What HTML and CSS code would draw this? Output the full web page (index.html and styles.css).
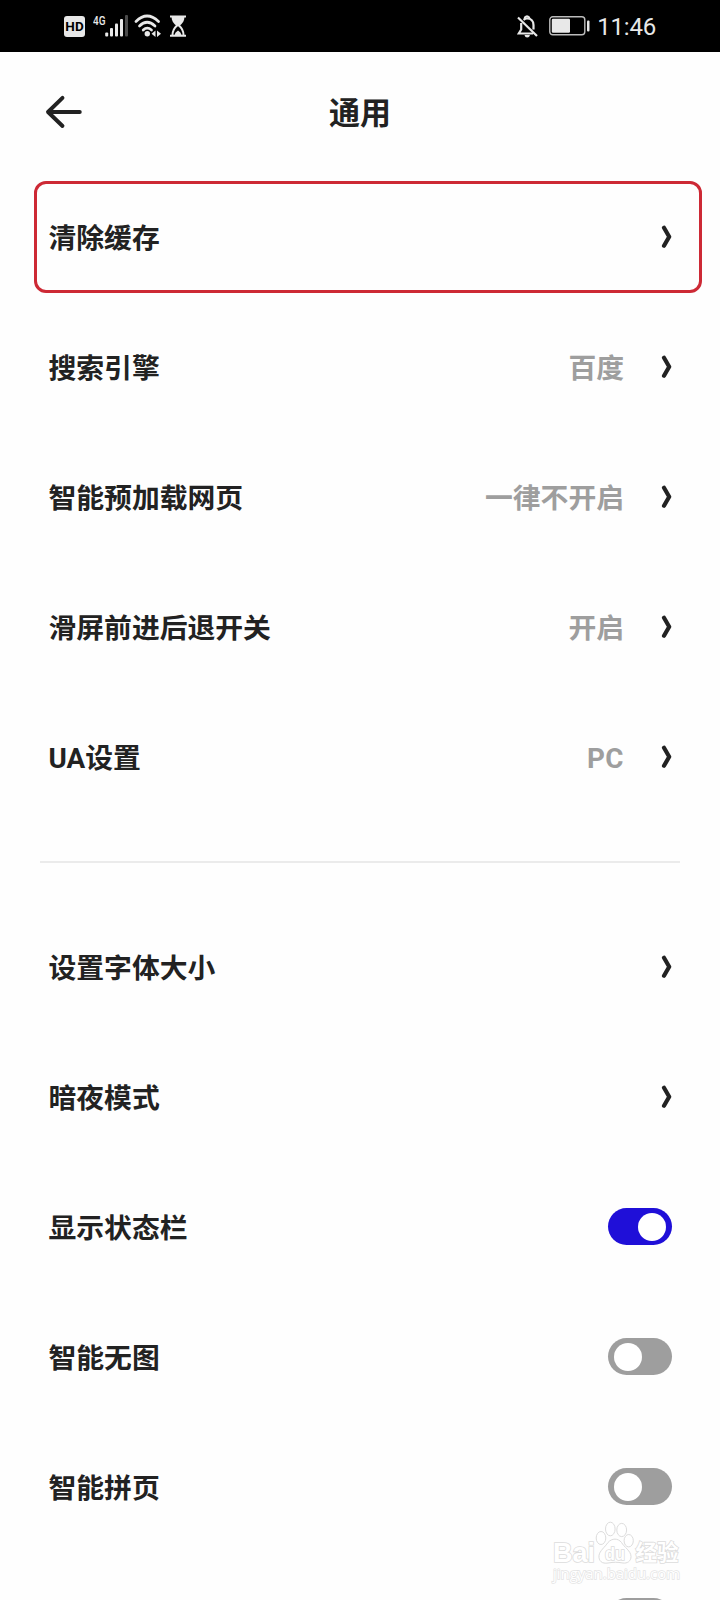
FILE: index.html
```html
<!DOCTYPE html>
<html lang="zh-CN">
<head>
<meta charset="utf-8">
<title>通用</title>
<link rel="stylesheet" href="styles.css">
</head>
<body>
<svg class="defs" width="0" height="0">
  <symbol id="chevron" viewBox="0 0 12 24"><path d="M4 2.800 L9.200 11.800 L4 20.800" fill="none" stroke="#222" stroke-width="4.200" stroke-linecap="round" stroke-linejoin="round"/></symbol>
</svg>
<div class="screen">
  <header class="status">
    <div class="status-left">
      <span class="hd">HD</span>
      <svg class="signal" width="36" height="24" viewBox="0 0 36 24">
        <g fill="#e8e8e8"><rect x="12.200" y="18.400" width="3" height="4" rx="1"/><rect x="17" y="14" width="3" height="8.400" rx="1"/><rect x="22" y="9.400" width="3" height="13" rx="1"/><rect x="27" y="5" width="3" height="17.400" rx="1"/></g>
        <rect x="32" y="1" width="3" height="21.400" rx="1" fill="#4a4a4a"/>
        <text class="net" x="0" y="10.500" textLength="12.500" lengthAdjust="spacingAndGlyphs">4G</text>
      </svg>
      <svg class="wifi" width="28" height="24" viewBox="0 0 28 24">
        <g fill="none" stroke="#e8e8e8" stroke-width="2.700" stroke-linecap="round"><path d="M2 7.500 Q13 -3.500 24.500 7.500"/><path d="M5.500 12 Q13 4.500 21 12"/><path d="M9.200 16 Q13.200 12.200 17.500 16"/></g>
        <circle cx="13.300" cy="19.800" r="2.700" fill="#e8e8e8"/>
        <path d="M21.500 16.500 V23 L17.500 19.800 Z M23 16.500 V23 L27 19.800 Z" fill="#e8e8e8"/>
      </svg>
      <svg class="hourglass" width="18" height="22" viewBox="0 0 18 22">
        <path d="M1 1.500 H17 M1 20.700 H17" stroke="#e8e8e8" stroke-width="2"/>
        <path d="M2.500 1.500 H15.500 C15.500 6 13.500 8.500 10.500 11 H7.500 C4.500 8.500 2.500 6 2.500 1.500 Z" fill="#e8e8e8"/>
        <path d="M3.500 20 C3.500 15 5.200 13 8 10.500 H10 C12.800 13 14.500 15 14.500 20" fill="none" stroke="#e8e8e8" stroke-width="2"/>
        <path d="M5.500 20 Q6 17 9 15.500 Q12 17 12.500 20 Z" fill="#e8e8e8"/>
      </svg>
    </div>
    <div class="status-right">
      <svg class="bell" width="22" height="24" viewBox="0 0 22 24">
        <g fill="none" stroke="#e8e8e8" stroke-width="2.200"><path d="M1 2.500 L20 21"/><path d="M4.200 8 V14.500 L1.800 18.500 H16"/><path d="M6.500 4.800 Q8.500 3.400 10 3.400 C14 3.400 16.500 6.300 16.500 10 V14.500"/><path d="M8 4 V2.500 Q10 0 12 2.500 V4"/></g>
        <path d="M7.500 20 H13 Q12.500 22.500 10.200 22.500 Q8 22.500 7.500 20 Z" fill="#e8e8e8"/>
      </svg>
      <svg class="battery" width="42" height="20" viewBox="0 0 42 20">
        <rect x=".8" y=".8" width="35" height="18" rx="3" fill="none" stroke="#bcbcbc" stroke-width="1.400"/>
        <rect x="2.800" y="2.800" width="18.200" height="14" rx="1.200" fill="#e8e8e8"/>
        <rect x="38" y="4.500" width="2.500" height="11" rx="1" fill="#e8e8e8"/>
      </svg>
      <span class="clock">11:46</span>
    </div>
  </header>

  <nav class="titlebar">
    <svg class="back" width="38" height="34" viewBox="0 0 38 34"><path d="M34.800 17 H3 M17.500 2.800 L3 17 L17.500 31" fill="none" stroke="#222" stroke-width="3.900" stroke-linecap="round" stroke-linejoin="round"/></svg>
    <h1 class="title">通用</h1>
  </nav>

  <main>
    <section class="group">
      <div class="row highlighted"><span class="label">清除缓存</span><svg class="chev"><use href="#chevron"/></svg></div>
      <div class="row"><span class="label">搜索引擎</span><span class="value">百度</span><svg class="chev"><use href="#chevron"/></svg></div>
      <div class="row"><span class="label">智能预加载网页</span><span class="value">一律不开启</span><svg class="chev"><use href="#chevron"/></svg></div>
      <div class="row"><span class="label">滑屏前进后退开关</span><span class="value">开启</span><svg class="chev"><use href="#chevron"/></svg></div>
      <div class="row"><span class="label">UA设置</span><span class="value latin">PC</span><svg class="chev"><use href="#chevron"/></svg></div>
    </section>
    <hr class="divider">
    <section class="group">
      <div class="row"><span class="label">设置字体大小</span><svg class="chev"><use href="#chevron"/></svg></div>
      <div class="row"><span class="label">暗夜模式</span><svg class="chev"><use href="#chevron"/></svg></div>
      <div class="row"><span class="label">显示状态栏</span><span class="toggle on"></span></div>
      <div class="row"><span class="label">智能无图</span><span class="toggle"></span></div>
      <div class="row"><span class="label">智能拼页</span><span class="toggle"></span></div>
      <div class="row"><span class="toggle"></span></div>
    </section>
  </main>

  <svg class="watermark" width="140" height="68" viewBox="0 0 140 68">
    <g class="wm-line">
      <ellipse cx="53" cy="20" rx="4.800" ry="6.500"/><ellipse cx="62.300" cy="11" rx="4.800" ry="6.800"/><ellipse cx="73.700" cy="12" rx="4.900" ry="6.600"/><ellipse cx="80.700" cy="22.700" rx="4.600" ry="6.200"/>
      <path d="M60 24.500 C64 20 70 20 73.500 24.500 C76 29 83 33 83 38.500 C83 43.500 79 45.500 75 45 C69 44 66 44 60 45 C54 46 50.500 43 51 37.500 C51.500 33 57 29 60 24.500 Z"/>
    </g>
    <text class="wm-brand" x="5" y="44" textLength="42" lengthAdjust="spacingAndGlyphs">Bai</text>
    <text class="wm-du" x="57" y="41.500" textLength="20" lengthAdjust="spacingAndGlyphs">du</text>
    <text class="wm-cn" x="87.500" y="42" textLength="43" lengthAdjust="spacingAndGlyphs">经验</text>
    <text class="wm-url" x="5" y="61" textLength="127" lengthAdjust="spacingAndGlyphs">jingyan.baidu.com</text>
  </svg>
</div>
</body>
</html>
```
FILE: styles.css
```css
*, *::before { box-sizing: border-box; }
body { margin: 0; background: #fefefe; font-family: Roboto, "Noto Sans CJK SC", sans-serif; color: #222; }
.defs { position: absolute; }
.screen { position: relative; width: 720px; height: 1600px; overflow: hidden; }
.status { height: 52px; background: #000; color: #e8e8e8; display: flex; justify-content: space-between; padding: 0 64px; }
.status-left, .status-right { display: flex; align-items: flex-start; }
.hd { width: 21px; height: 21px; margin-top: 16px; border-radius: 3px; background: #e8e8e8; color: #000; font: 700 13.500px/21px Roboto, sans-serif; text-align: center; }
.signal { margin: 14px 0 0 8px; }
.net { font: 500 13px Roboto, sans-serif; fill: #e8e8e8; }
.wifi { margin: 14px 0 0 5px; }
.hourglass { margin: 15px 0 0 7px; }
.bell { margin-top: 15px; }
.battery { margin: 16px 0 0 10px; }
.clock { font-size: 24px; line-height: 28px; margin: 13px 0 0 6px; letter-spacing: -0.200px; }
.titlebar { height: 120px; display: grid; grid-template-columns: 100px 1fr 100px; align-items: center; }
.back { margin-left: 45px; }
.title { margin: 0; padding-top: 4px; text-align: center; font-size: 31px; line-height: 44px; font-weight: 700; }
.group { padding: 0 48px; }
.row { position: relative; height: 130px; display: flex; align-items: center; font-size: 27.8px; font-weight: 700; line-height: 40px; }
.highlighted::before { content: ""; position: absolute; left: -14.500px; top: 9px; width: 668px; height: 112px; border: 3px solid #cd2935; border-radius: 12px; }
.label { flex: 1; padding: 4px 0 0 .5px; }
.value { color: #9e9e9e; padding-top: 4px; margin-right: 36px; }
.value.latin { letter-spacing: .5px; }
.chev { width: 12px; height: 24px; }
.divider { height: 2px; margin: 39px 40px; border: 0; background: #ebebeb; }
.toggle { width: 64px; height: 37px; border-radius: 19px; margin: 0 0 1px auto; padding: 4.500px 6px; background: #9e9e9e; display: flex; }
.toggle::before { content: ""; width: 28px; height: 28px; border-radius: 50%; background: #fff; }
.toggle.on { background: #1f0fd8; justify-content: flex-end; }
.watermark { position: absolute; left: 548px; top: 1518px; }
.wm-line, .watermark text { fill: #fff; stroke: #dcdcdc; stroke-width: 1px; }
.watermark text { paint-order: stroke; stroke-width: 1.600px; }
.wm-brand { font: 700 28px "Liberation Sans", sans-serif; }
.wm-du { font: 700 18px "Liberation Sans", sans-serif; }
.wm-cn { font: 700 22px "Noto Sans CJK SC", sans-serif; }
.watermark .wm-url { font: 400 14.500px "Open Sans", sans-serif; stroke: #e4e4e4; stroke-width: 1.400px; }
```
